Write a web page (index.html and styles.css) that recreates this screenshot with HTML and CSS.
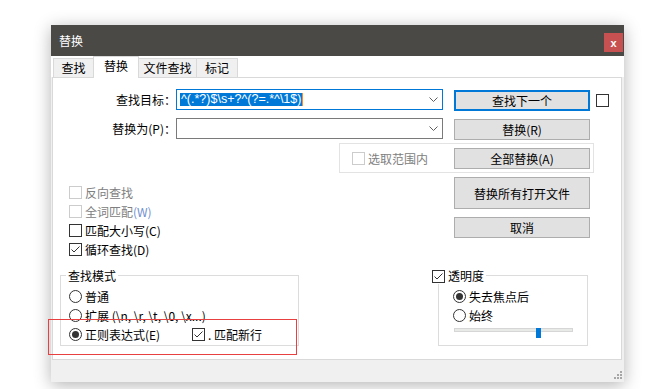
FILE: index.html
```html
<!DOCTYPE html>
<html lang="zh-CN">
<head>
  <meta charset="UTF-8" />
  <title>替换</title>
  <link rel="stylesheet" href="styles.css">
</head>
<body>
  <div class="page">
    <div class="window">
      <div class="titlebar">
        <span class="title">替换</span>
        <span class="close">x</span>
      </div>

      <div class="tabs">
        <span class="tab t1">查找</span>
        <span class="tab t2 active">替换</span>
        <span class="tab t3">文件查找</span>
        <span class="tab t4">标记</span>
      </div>

      <div class="panel">
        <div class="row">
          <label class="field-label">查找目标：</label>
          <div class="combo focus">
            <span class="sel">^(.*?)$\s+?^(?=.*^\1$)</span><span class="caret"></span>
            <svg class="chev" width="9" height="5" viewBox="0 0 9 5"><polyline points="0.5,0.5 4.5,4.5 8.5,0.5" fill="none" stroke="#5f5f5f" stroke-width="1"/></svg>
          </div>
          <button class="btn default">查找下一个</button>
          <span class="box side"></span>
        </div>

        <div class="row row2">
          <label class="field-label">替换为(P)：</label>
          <div class="combo">
            <svg class="chev" width="9" height="5" viewBox="0 0 9 5"><polyline points="0.5,0.5 4.5,4.5 8.5,0.5" fill="none" stroke="#5f5f5f" stroke-width="1"/></svg>
          </div>
          <button class="btn">替换(R)</button>
        </div>

        <div class="scope">
          <span class="opt disabled"><span class="box dis"></span>选取范围内</span>
          <button class="btn">全部替换(A)</button>
        </div>

        <div class="middle">
          <div class="options">
            <div class="opt disabled"><span class="box dis"></span>反向查找</div>
            <div class="opt disabled"><span class="box dis"></span><span>全词匹配<span class="key">(W)</span></span></div>
            <div class="opt"><span class="box"></span>匹配大小写(C)</div>
            <div class="opt">
              <span class="box"><svg width="11" height="11" viewBox="0 0 11 11"><polyline points="1.5,5.5 4,8 9.5,2.5" fill="none" stroke="#333" stroke-width="1"/></svg></span>循环查找(D)
            </div>
          </div>
          <div class="actions">
            <button class="btn tall">替换所有打开文件</button>
            <button class="btn">取消</button>
          </div>
        </div>

        <div class="bottom">
          <div class="group mode">
            <div class="legend">查找模式</div>
            <div class="opt"><span class="radio"></span>普通</div>
            <div class="opt"><span class="radio"></span>扩展 (\n, \r, \t, \0, \x...)</div>
            <div class="opt">
              <span class="regex"><span class="radio on"></span>正则表达式(E)</span>
              <span class="box"><svg width="11" height="11" viewBox="0 0 11 11"><polyline points="1.5,5.5 4,8 9.5,2.5" fill="none" stroke="#333" stroke-width="1"/></svg></span>. 匹配新行
            </div>
          </div>

          <div class="group trans">
            <div class="legend">
              <span class="box"><svg width="11" height="11" viewBox="0 0 11 11"><polyline points="1.5,5.5 4,8 9.5,2.5" fill="none" stroke="#333" stroke-width="1"/></svg></span>透明度
            </div>
            <div class="opt"><span class="radio on"></span>失去焦点后</div>
            <div class="opt"><span class="radio"></span>始终</div>
            <div class="slider">
              <div class="track"></div>
              <div class="thumb"></div>
            </div>
          </div>
        </div>
      </div>

      <div class="statusbar">
        <svg width="8" height="8" viewBox="0 0 8 8" fill="#a6a6a6">
          <rect x="6" y="0" width="2" height="2"/>
          <rect x="3" y="3" width="2" height="2"/><rect x="6" y="3" width="2" height="2"/>
          <rect x="0" y="6" width="2" height="2"/><rect x="3" y="6" width="2" height="2"/><rect x="6" y="6" width="2" height="2"/>
        </svg>
      </div>
    </div>

    <div class="mark"></div>
  </div>
</body>
</html>
```

FILE: styles.css
```css
* {
  margin: 0;
  padding: 0;
  box-sizing: border-box;
}

body {
  font-family: "Noto Sans CJK SC", "Noto Sans", sans-serif;
  font-size: 12px;
  color: #000;
  background: #fff;
}

.page {
  position: relative;
  height: 389px;
  padding: 25px 0 0 51px;
}

.window {
  width: 573px;
  background: #f0f0f0;
  box-shadow: 0 3px 16px rgba(0, 0, 0, 0.3);
}

.titlebar {
  height: 31px;
  background: #4b4946;
  display: flex;
  align-items: flex-end;
  justify-content: space-between;
  padding-left: 8px;
}

.title {
  color: #fff;
  line-height: 16px;
  align-self: center;
}

.close {
  width: 19px;
  height: 19px;
  margin: 0 1px 4px 0;
  background: #c75050;
  color: #fff;
  font: bold 11px "Liberation Sans", sans-serif;
  display: flex;
  align-items: center;
  justify-content: center;
}

/* tabs */
.tabs {
  height: 21px;
  background: #fff;
  display: flex;
  align-items: flex-end;
  padding-left: 2px;
}

.tab {
  height: 19px;
  border: 1px solid #d9d9d9;
  border-bottom: none;
  background: #f0f0f0;
  text-align: center;
  line-height: 18px;
  margin-right: -1px;
}

.tab.active {
  height: 22px;
  margin-bottom: -1px;
  background: #fff;
  position: relative;
  z-index: 1;
  line-height: 17px;
}

.t1 { width: 41px; }
.t2 { width: 46px; }
.t3 { width: 59px; }
.t4 { width: 42px; }

/* panel */
.panel {
  height: 283px;
  margin: 0 2px 0 1px;
  background: #fff;
  border: 1px solid #d9d9d9;
  padding-top: 11px;
}

.row {
  display: flex;
  align-items: flex-start;
  height: 21px;
  margin-bottom: 8px;
}

.row2 {
  margin-bottom: 4px;
}

.field-label {
  width: 123px;
  text-align: right;
  line-height: 21px;
}

.combo {
  width: 267px;
  height: 21px;
  border: 1px solid #7a7a7a;
  display: flex;
  align-items: center;
  padding: 0 4px 0 3px;
}

.combo.focus {
  border-color: #0078d7;
}

.sel {
  background: #0078d7;
  color: #fff;
  font-family: "Liberation Sans", sans-serif;
  font-size: 12.5px;
  line-height: 13px;
  padding: 0 1px;
}

.caret {
  width: 1px;
  height: 13px;
  background: #ff8a2a;
}

.chev {
  margin-left: auto;
}

.btn {
  width: 136px;
  height: 21px;
  background: #e1e1e1;
  border: 1px solid #adadad;
  font: inherit;
  line-height: 19px;
  color: #000;
}

.row .btn {
  margin: 1px 0 0 11px;
}

.btn.default {
  border: 2px solid #0078d7;
  line-height: 17px;
}

.btn.tall {
  height: 32px;
}

.box {
  width: 13px;
  height: 13px;
  border: 1px solid #333;
  background: #fff;
  display: flex;
  align-items: center;
  justify-content: center;
  flex-shrink: 0;
}

.box.dis {
  border-color: #cccccc;
}

.box.side {
  margin: 5px 0 0 6px;
}

.radio {
  width: 13px;
  height: 13px;
  border: 1px solid #333;
  border-radius: 50%;
  display: flex;
  align-items: center;
  justify-content: center;
  flex-shrink: 0;
}

.radio.on::after {
  content: "";
  width: 7px;
  height: 7px;
  border-radius: 50%;
  background: #333;
}

.opt {
  display: flex;
  align-items: center;
  gap: 3px;
  height: 19px;
  line-height: 19px;
}

.disabled {
  color: #808080;
}

.key {
  color: #6f8fcf;
}

.scope {
  margin-left: 286px;
  width: 255px;
  height: 30px;
  border: 1px solid #e3e3e3;
  display: flex;
  align-items: center;
  justify-content: space-between;
  padding: 0 3px 0 12px;
}

.middle {
  display: flex;
  margin-top: 4px;
}

.options {
  width: 401px;
  padding: 6px 0 0 16px;
}

.actions {
  display: flex;
  flex-direction: column;
  gap: 8px;
}

/* bottom groups */
.bottom {
  display: flex;
  margin-top: 16px;
  padding-left: 7px;
}

.group {
  border: 1px solid #dcdcdc;
}

.legend {
  display: flex;
  align-items: center;
  gap: 3px;
  width: max-content;
  height: 16px;
  line-height: 16px;
  margin: -8px 0 3px -3px;
  padding: 0 2px;
  background: #fff;
}

.mode {
  width: 239px;
  padding: 0 0 1px 8px;
}

.regex {
  display: flex;
  align-items: center;
  gap: 3px;
  width: 120px;
}

.trans {
  width: 150px;
  margin-left: 139px;
  padding: 0 0 7px 14px;
}

.trans .legend {
  margin-left: -21px;
  padding: 0 2px 0 0;
}

.slider {
  position: relative;
  width: 119px;
  height: 10px;
  margin: 3px 0 0 1px;
}

.track {
  margin-top: 3px;
  height: 4px;
  background: #e7eae7;
  border: 1px solid #d6d6d6;
}

.thumb {
  position: absolute;
  left: 82px;
  top: 0;
  width: 5px;
  height: 10px;
  background: #0078d7;
}

.statusbar {
  height: 22px;
  display: flex;
  justify-content: flex-end;
  align-items: flex-end;
  padding: 0 2px 3px 0;
}

/* red annotation frame */
.mark {
  position: absolute;
  left: 48px;
  top: 319px;
  width: 249px;
  height: 36px;
  border: 1px solid #e84040;
}
```
